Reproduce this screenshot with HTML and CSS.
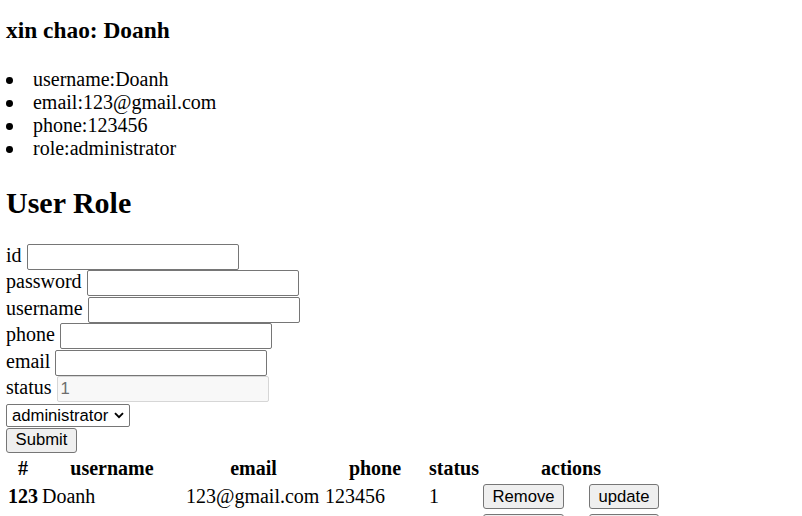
FILE: index.html
```html
<!DOCTYPE html>
<html>
<head>
<meta charset="utf-8">
<link rel="stylesheet" href="styles.css">
</head>
<body class="page">
<h3 class="greeting">xin chao: Doanh</h3>
<ul class="info">
  <li class="info-item">username:Doanh</li>
  <li class="info-item">email:123@gmail.com</li>
  <li class="info-item">phone:123456</li>
  <li class="info-item">role:administrator</li>
</ul>
<section class="role-section">
  <h1 class="title">User Role</h1>
  <form class="user-form">
    <div class="field"><label class="field-label">id</label><input class="field-input" type="text"></div>
    <div class="field"><label class="field-label">password</label><input class="field-input" type="text"></div>
    <div class="field"><label class="field-label">username</label><input class="field-input" type="text"></div>
    <div class="field"><label class="field-label">phone</label><input class="field-input" type="text"></div>
    <div class="field"><label class="field-label">email</label><input class="field-input" type="text"></div>
    <div class="field"><label class="field-label">status</label><input class="field-input" type="text" value="1" disabled></div>
    <span class="select-wrap">
      <select class="role-select"><option>administrator</option><option>user</option></select>
      <svg class="select-arrow" width="10" height="7" viewBox="0 0 10 7"><path d="M1 1.2 L5 5.2 L9 1.2" fill="none" stroke="#000" stroke-width="1.9"/></svg>
    </span>
    <button class="btn submit-btn" type="button">Submit</button>
  </form>
  <table class="users">
    <thead>
      <tr>
        <th class="col-id">#</th>
        <th class="col-username">username</th>
        <th class="col-email">email</th>
        <th class="col-phone">phone</th>
        <th class="col-status">status</th>
        <th class="col-actions">actions</th>
      </tr>
    </thead>
    <tbody>
      <tr>
        <th class="cell-id">123</th>
        <td class="cell">Doanh</td>
        <td class="cell">123@gmail.com</td>
        <td class="cell">123456</td>
        <td class="cell">1</td>
        <td class="cell actions"><button class="btn" type="button">Remove</button><button class="btn btn-update" type="button">update</button></td>
      </tr>
      <tr>
        <th class="cell-id">123</th>
        <td class="cell">Doanh</td>
        <td class="cell">123@gmail.com</td>
        <td class="cell">123456</td>
        <td class="cell">1</td>
        <td class="cell actions"><button class="btn" type="button">Remove</button><button class="btn btn-update" type="button">update</button></td>
      </tr>
    </tbody>
  </table>
</section>
</body>
</html>
```
FILE: styles.css
```css
html, body {
  background: #ffffff;
}
.page {
  margin: 0;
  padding: 0 6px;
  font-family: "Liberation Serif", "Times New Roman", serif;
  font-size: 20px;
  color: #000000;
}
.greeting {
  margin: 16.9px 0 0 0;
  font-size: 23.4px;
  line-height: 27px;
  font-weight: bold;
}
.info {
  list-style: none;
  margin: 23.85px 0 0 0;
  padding: 0 0 0 27px;
}
.info-item {
  line-height: 23px;
}
.info-item::before {
  content: "";
  display: inline-block;
  width: 6.8px;
  height: 6.8px;
  border-radius: 50%;
  background: #000000;
  margin-left: -27px;
  margin-right: 20.2px;
  vertical-align: 1.6px;
}
.role-section {
  margin: 0;
}
.title {
  margin: 25px 0 0 0;
  font-size: 30px;
  line-height: 35px;
  font-weight: bold;
}
.user-form {
  margin: 24.3px 0 0 0;
}
.field {
  display: flex;
  align-items: baseline;
  gap: 5px;
  height: 26.4px;
}
.field-label {
  line-height: 23px;
}
.field-input {
  box-sizing: border-box;
  width: 212px;
  height: 26px;
  margin: 0;
  padding: 1px 3px;
  border: 1px solid #767676;
  border-radius: 2px;
  background: #ffffff;
  font-family: "Liberation Sans", Arial, sans-serif;
  font-size: 16.67px;
  color: #000000;
}
.field-input:disabled {
  background: #f8f8f8;
  border-color: #d6d6d6;
  color: #6d6d6d;
}
.select-wrap {
  position: relative;
  display: block;
  width: 124px;
  margin: 1.6px 0 0 0;
}
.role-select {
  display: block;
  box-sizing: border-box;
  -webkit-appearance: none;
  appearance: none;
  margin: 0;
  width: 124px;
  height: 23px;
  padding: 0 0 0 5px;
  border: 1px solid #767676;
  border-radius: 2px;
  background: #ffffff;
  font-family: "Liberation Sans", Arial, sans-serif;
  font-size: 16.67px;
  line-height: 21px;
  color: #000000;
}
.select-arrow {
  position: absolute;
  left: 108px;
  top: 8px;
  pointer-events: none;
}
.btn {
  box-sizing: border-box;
  height: 25px;
  margin: 0;
  padding: 1px 8px;
  border: 1px solid #767676;
  border-radius: 3px;
  background: #efefef;
  font-family: "Liberation Sans", Arial, sans-serif;
  font-size: 16.67px;
  color: #000000;
}
.submit-btn {
  display: block;
  margin-top: 0.6px;
  width: 71px;
}
.users {
  margin-top: 1px;
  border-spacing: 2px;
  margin-left: -1px;
}
.users th,
.users td {
  padding: 1px;
  line-height: 23px;
}
.users thead th {
  text-align: center;
}
.col-username {
  width: 140px;
}
.col-email {
  width: 135px;
}
.col-phone {
  width: 100px;
}
.cell-id {
  text-align: left;
}
.cell {
  text-align: left;
}
.actions {
  white-space: nowrap;
}
.actions .btn {
  width: 81px;
  vertical-align: middle;
}
.actions .btn-update {
  width: 70px;
  margin-left: 25px;
}
```
